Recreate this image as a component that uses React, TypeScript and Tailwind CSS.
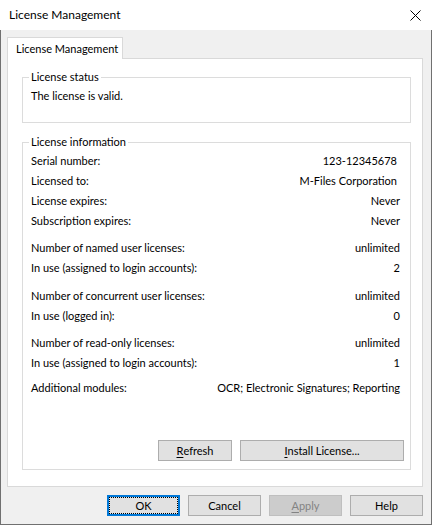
import type { ReactNode } from "react"

type Row = {
	label: string
	value: string
	inset?: boolean
}

const groups: { gap: string; rows: Row[] }[] = [
	{
		gap: "mt-0",
		rows: [
			{ label: "Serial number:", value: "123-12345678", inset: true },
			{ label: "Licensed to:", value: "M-Files Corporation", inset: true },
			{ label: "License expires:", value: "Never" },
			{ label: "Subscription expires:", value: "Never" },
		],
	},
	{
		gap: "mt-[7px]",
		rows: [
			{ label: "Number of named user licenses:", value: "unlimited" },
			{ label: "In use (assigned to login accounts):", value: "2" },
		],
	},
	{
		gap: "mt-[8px]",
		rows: [
			{ label: "Number of concurrent user licenses:", value: "unlimited" },
			{ label: "In use (logged in):", value: "0" },
		],
	},
	{
		gap: "mt-[7px]",
		rows: [
			{ label: "Number of read-only licenses:", value: "unlimited" },
			{ label: "In use (assigned to login accounts):", value: "1" },
		],
	},
	{
		gap: "mt-[5px]",
		rows: [{ label: "Additional modules:", value: "OCR; Electronic Signatures; Reporting" }],
	},
]

function Button({ children, width, disabled }: { children: ReactNode; width: string; disabled?: boolean }) {
	return (
		<button
			className={`${width} h-[21px] flex items-center justify-center border ${
				disabled ? "bg-[#cccccc] border-[#bfbfbf] text-[#838383]" : "bg-[#e1e1e1] border-[#adadad] text-black"
			}`}
		>
			{children}
		</button>
	)
}

export default function App() {
	return (
		<div className="w-[432px] h-[525px] flex flex-col bg-white text-[11px] leading-[16px] text-black font-['Lato','Noto_Sans',sans-serif]">
			{/* title bar */}
			<div className="h-[30px] flex items-center justify-between pl-[9px] pr-[11px] bg-white">
				<span className="text-[12px]">License Management</span>
				<svg width="11" height="11" viewBox="0 0 11 11" className="mt-[1px]">
					<path d="M0.5 0.5 L10.5 10.5 M10.5 0.5 L0.5 10.5" stroke="#000" strokeWidth="1" />
				</svg>
			</div>

			{/* dialog body */}
			<div className="flex-1 flex flex-col bg-[#f0f0f0] border-x border-b border-[#707070] pl-[6px] pr-[8px] pt-[7px]">
				<div className="relative z-10 w-[116px] h-[22px] -mb-px flex items-center pl-[8px] whitespace-nowrap bg-white border-x border-t border-[#d9d9d9]">
					License Management
				</div>

				<div className="h-[429px] bg-white border border-[#d9d9d9] pl-[14px] pr-[11px] pt-[10px]">
					<fieldset className="border border-[#dcdcdc]">
						<legend className="ml-[6px] px-[2px]">License status</legend>
						<div className="pl-[8px] pt-[3px] pb-[18px]">The license is valid.</div>
					</fieldset>

					<fieldset className="mt-[11px] border border-[#dcdcdc] pb-[8px]">
						<legend className="ml-[6px] px-[2px]">License information</legend>
						<div className="pl-[8px] pr-[10px] pt-[1px]">
							{groups.map((group, i) => (
								<div key={i} className={group.gap}>
									{group.rows.map((row) => (
										<div key={row.label + row.value} className="h-[20px] flex items-center justify-between">
											<span>{row.label}</span>
											<span className={row.inset ? "pr-[3px]" : ""}>{row.value}</span>
										</div>
									))}
								</div>
							))}
						</div>

						<div className="mt-[42px] flex justify-end gap-[8px] pr-[6px]">
							<Button width="w-[74px]">
								<span className="underline underline-offset-2">R</span>efresh
							</Button>
							<Button width="w-[164px]">
								<span className="underline underline-offset-2">I</span>nstall License...
							</Button>
						</div>
					</fieldset>
				</div>

				<div className="mt-[8px] flex justify-end gap-[8px]">
					<button className="w-[73px] h-[21px] border-2 border-[#0078d7] bg-[#e1e1e1]">
						<div className="h-full w-full flex items-center justify-center border border-dotted border-black">OK</div>
					</button>
					<Button width="w-[73px]">Cancel</Button>
					<Button width="w-[73px]" disabled>
						<span className="underline underline-offset-2">A</span>pply
					</Button>
					<Button width="w-[73px]">Help</Button>
				</div>
			</div>
		</div>
	)
}
